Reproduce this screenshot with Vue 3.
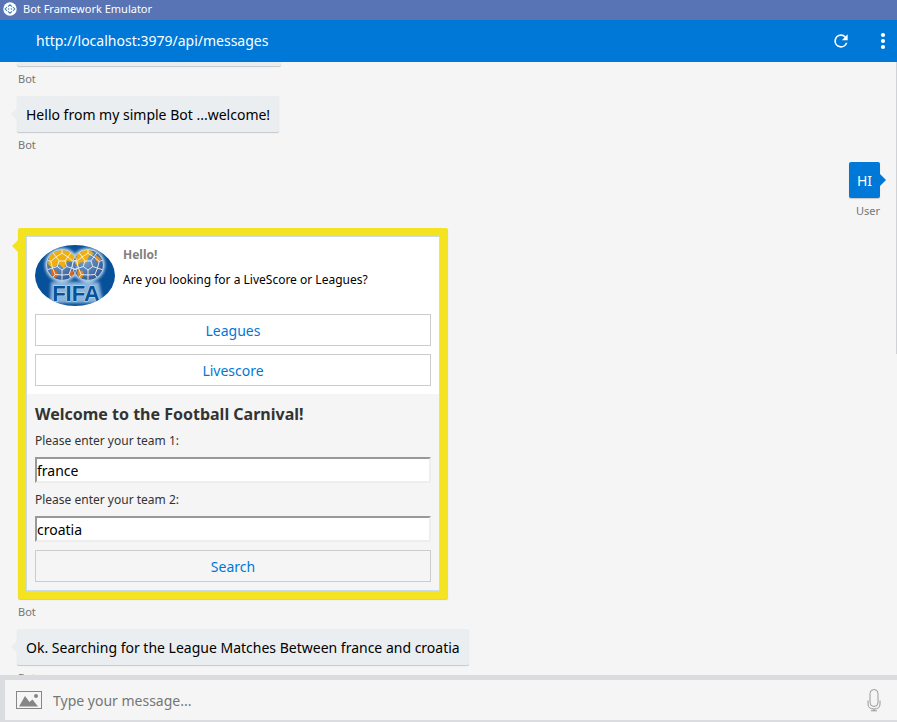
<script setup>
import { ref } from 'vue'

const team1 = ref('france')
const team2 = ref('croatia')
const draft = ref('')

const ringPoints = (cx, cy, r) =>
  Array.from({ length: 5 }, (_, i) => {
    const a = ((i * 72 + 90) * Math.PI) / 180
    return [cx + r * Math.cos(a), cy + r * Math.sin(a)]
  })

const makeBall = (cx, cy) => {
  const inner = ringPoints(cx, cy, 5)
  const mid = ringPoints(cx, cy, 10)
  const outer = ringPoints(cx, cy, 15)
  let d = 'M' + inner.map((p) => p.join(' ')).join('L') + 'Z'
  inner.forEach((p, i) => {
    const m = mid[i]
    const n = mid[(i + 1) % 5]
    const kx = cx + ((m[0] + n[0]) / 2 - cx) * 1.45
    const ky = cy + ((m[1] + n[1]) / 2 - cy) * 1.45
    d += `M${p.join(' ')}L${m.join(' ')}L${kx} ${ky}L${n.join(' ')}`
    d += `M${m.join(' ')}L${outer[i].join(' ')}M${kx} ${ky}L${cx + (kx - cx) * 1.28} ${cy + (ky - cy) * 1.28}`
  })
  return { cx, cy, d }
}
const balls = [makeBall(27, 20), makeBall(53, 20)]
</script>

<template>
  <div class="app">
    <div class="titlebar">
      <svg class="app-icon" viewBox="0 0 14 14" aria-hidden="true">
        <circle cx="7" cy="7" r="6.7" fill="#fff" />
        <path d="M5 4.6 7 2.8l2 1.8M5 9.4l2 1.8 2-1.8M4 5 2.2 7 4 9M10 5l1.8 2L10 9" fill="none" stroke="#3c86c4" stroke-width="1.1" />
        <circle cx="5.6" cy="7" r=".8" fill="#3c86c4" />
        <circle cx="8.4" cy="7" r=".8" fill="#3c86c4" />
      </svg>
      <span>Bot Framework Emulator</span>
    </div>

    <header class="header">
      <span class="url">http://localhost:3979/api/messages</span>
      <button class="icon-button" type="button" aria-label="Refresh">
        <svg width="20" height="20" viewBox="0 0 24 24"><path fill="#fff" d="M17.65 6.35A7.96 7.96 0 0 0 12 4a8 8 0 1 0 7.73 10h-2.08A6 6 0 1 1 12 6c1.66 0 3.14.69 4.22 1.78L13 11h7V4z" /></svg>
      </button>
      <button class="icon-button" type="button" aria-label="Menu">
        <svg width="20" height="20" viewBox="0 0 20 20" fill="#fff"><circle cx="10" cy="4" r="2.1" /><circle cx="10" cy="10" r="2.1" /><circle cx="10" cy="16" r="2.1" /></svg>
      </button>
    </header>

    <main class="chat">
      <div class="message">
        <div class="bubble bubble-cut"></div>
        <div class="from">Bot</div>
      </div>
      <div class="message">
        <div class="bubble tail">Hello from my simple Bot ...welcome!</div>
        <div class="from">Bot</div>
      </div>
      <div class="message mine">
        <div class="bubble tail">HI</div>
        <div class="from">User</div>
      </div>
      <div class="message">
        <div class="card tail">
          <div class="card-body">
            <section class="section">
              <div class="hero">
                <svg class="logo" viewBox="0 0 80 61" role="img" aria-label="FIFA">
                  <defs>
                    <clipPath id="oval"><ellipse cx="40" cy="30.5" rx="40" ry="30.5" /></clipPath>
                    <radialGradient id="ball" cx=".4" cy=".35" r=".7">
                      <stop offset="0" stop-color="#7da4d0" />
                      <stop offset="1" stop-color="#2c5794" />
                    </radialGradient>
                    <filter id="glow" x="-20%" y="-20%" width="140%" height="140%"><feGaussianBlur stdDeviation="1.4" /></filter>
                  </defs>
                  <g clip-path="url(#oval)">
                    <rect width="80" height="61" fill="#07509a" />
                    <g filter="url(#glow)" fill="#b9d7ef">
                      <circle cx="27" cy="20" r="17" />
                      <circle cx="53" cy="20" r="17" />
                      <path d="M16 37h48l4 21H15z" opacity=".75" />
                    </g>
                    <circle v-for="b in balls" :key="b.cx" :cx="b.cx" :cy="b.cy" r="15.5" fill="url(#ball)" />
                    <path d="M14 13q4-8 13-8 9 0 13 7l-3 5-5-1-3 8-5-5-7 4-4-4z" fill="#eeb010" />
                    <path d="M16 24l5 1 3 5-4 3-4-4zM34 27l5-2-1 6-4 2z" fill="#d9691b" />
                    <path d="M42 10q5-6 13-5l4 4-5 2-3 7-5-1-4 4-2-3z" fill="#eeb010" />
                    <path d="M43 25l5 1 1 4-3 4-4-5zM61 10l5 4-3 4-3-4z" fill="#e58a14" />
                    <path v-for="b in balls" :key="'seam' + b.cx" :d="b.d" fill="none" stroke="#eef4f8" stroke-width=".9" />
                    <circle v-for="b in balls" :key="'rim' + b.cx" :cx="b.cx" :cy="b.cy" r="15.5" fill="none" stroke="#dfeaf2" stroke-width=".7" />
                    <text x="41" y="56" text-anchor="middle" class="logo-text">FIFA</text>
                  </g>
                </svg>
                <div class="hero-text">
                  <div class="hero-title">Hello!</div>
                  <div class="hero-copy">Are you looking for a LiveScore or Leagues?</div>
                </div>
              </div>
              <button class="action" type="button">Leagues</button>
              <button class="action" type="button">Livescore</button>
            </section>
            <form class="section form" @submit.prevent>
              <h2 class="form-title">Welcome to the Football Carnival!</h2>
              <label class="field-label" for="team1">Please enter your team 1:</label>
              <input id="team1" v-model="team1" class="field" type="text" />
              <label class="field-label" for="team2">Please enter your team 2:</label>
              <input id="team2" v-model="team2" class="field" type="text" />
              <button class="action" type="submit">Search</button>
            </form>
          </div>
        </div>
        <div class="from">Bot</div>
      </div>
      <div class="message">
        <div class="bubble tail">Ok. Searching for the League Matches Between france and croatia</div>
        <div class="from">Bot</div>
      </div>
      <div class="scroll-thumb"></div>
    </main>

    <form class="composer" @submit.prevent>
      <button class="composer-button" type="button" aria-label="Upload image">
        <svg width="26" height="18" viewBox="0 0 26 18">
          <rect x=".5" y=".5" width="25" height="17" fill="none" stroke="#858585" />
          <path d="M3 15.5 9 5l4.500 6 3-2.500 5.500 7z" fill="#858585" />
          <circle cx="20" cy="5" r="2" fill="#858585" />
        </svg>
      </button>
      <input v-model="draft" class="composer-input" type="text" placeholder="Type your message..." aria-label="Type your message" />
      <button class="composer-button" type="button" aria-label="Speak">
        <svg width="14" height="24" viewBox="0 0 14 24" fill="none" stroke="#999">
          <rect x="3" y="1.500" width="8" height="17" rx="4" />
          <path d="M1 12.500v3.500q0 5 6 5t6-5v-3.500M7 21v2M4 22.800h6" />
        </svg>
      </button>
    </form>
  </div>
</template>

<style>
body {
  margin: 0;
}
</style>

<style scoped>
.app {
  display: flex;
  flex-direction: column;
  height: 100vh;
  background: #f5f5f5;
  font-family: "Noto Sans", "Open Sans", sans-serif;
  font-size: 14px;
  line-height: 20px;
  color: #000;
}
.app *,
.app {
  box-sizing: border-box;
}
button,
input {
  font: inherit;
  margin: 0;
}
.titlebar {
  display: flex;
  flex: none;
  align-items: center;
  gap: 6px;
  height: 20px;
  padding: 0 3px 2px;
  background: #5874b4;
  color: #fff;
  font-size: 11px;
  line-height: 18px;
}
.app-icon {
  width: 14px;
  height: 14px;
}
.header {
  display: flex;
  flex: none;
  align-items: center;
  height: 42px;
  padding: 0 4px 0 36px;
  background: #0078d7;
  color: #fff;
}
.url {
  flex: 1;
  line-height: 22px;
}
.icon-button,
.composer-button {
  display: flex;
  align-items: center;
  justify-content: center;
  padding: 0;
  border: 0;
  background: none;
}
.icon-button {
  width: 20px;
  height: 42px;
  margin-left: 22px;
}
.chat {
  position: relative;
  flex: 1;
  min-height: 0;
  overflow: hidden;
  padding: 0 17px;
}
.message {
  display: flex;
  flex-direction: column;
  align-items: flex-start;
}
.bubble {
  position: relative;
  padding: 9px 9px 7px;
  border-radius: 2px;
  background: #eaeef0;
  box-shadow: 0 1px 1px #c4c8ca;
}
.bubble-cut {
  width: 264px;
  height: 4px;
  padding: 0;
}
.from {
  margin: 5px 1px 9px;
  font-size: 11px;
  line-height: 16px;
  color: #767676;
}
.tail::before {
  content: "";
  position: absolute;
  top: 12px;
  left: -6px;
  border: solid transparent;
  border-width: 6px 6px 6px 0;
  border-right-color: #eaeef0;
}
.mine {
  align-items: flex-end;
}
.mine .bubble {
  padding-right: 8px;
  padding-left: 8px;
  background: #0078d7;
  color: #fff;
}
.mine .tail::before {
  right: -6px;
  left: auto;
  border-width: 6px 0 6px 6px;
  border-left-color: #0078d7;
}
.mine .from {
  margin-right: 0;
}
.card {
  position: relative;
  width: 430px;
  max-width: 100%;
  margin-left: 1px;
  padding: 8px;
  border-radius: 2px;
  background: #f3e321;
  box-shadow: 0 1px 1px #c4c8ca;
}
.card.tail::before {
  border-right-color: #f3e321;
}
.card-body {
  border: 1px solid #cbdce8;
  background: #fff;
}
.section {
  display: flex;
  flex-direction: column;
  gap: 8px;
  padding: 8px;
}
.hero {
  display: flex;
  gap: 8px;
}
.logo {
  flex: none;
  width: 80px;
  height: 61px;
}
.logo-text {
  font: bold 22px "Liberation Sans", sans-serif;
  fill: #07509a;
  stroke: #c4ddf0;
  stroke-width: 1px;
  paint-order: stroke;
}
.hero-title {
  margin-bottom: 5px;
  font-size: 12px;
  font-weight: 700;
  color: #808080;
}
.hero-copy {
  font-size: 12px;
}
.action {
  height: 32px;
  padding: 2px 0 0;
  border: 1px solid #ccc;
  background: transparent;
  color: #0078d7;
}
.form {
  background: #f5f5f5;
}
.form-title {
  margin: 0 0 -2px;
  font-size: 16px;
  line-height: 24px;
  color: #333;
}
.field-label {
  font-size: 12px;
  line-height: 17px;
  color: #333;
}
.field {
  width: 100%;
  height: 26px;
  padding: 0;
  border: 2px solid;
  border-color: #999 #eee #eee #999;
  background: #fff;
  color: #000;
}
.scroll-thumb {
  position: absolute;
  top: 0;
  right: 0;
  width: 1px;
  height: 292px;
  background: #d0d2d5;
}
.composer {
  display: flex;
  flex: none;
  align-items: center;
  gap: 11px;
  height: 47px;
  padding: 0 16px 0 11px;
  border: solid #dadce0;
  border-width: 5px 0 2px 5px;
}
.composer-input {
  flex: 1;
  min-width: 0;
  padding: 2px 0 0;
  border: 0;
  outline: 0;
  background: transparent;
}
.composer-input::placeholder {
  color: #767676;
  opacity: 1;
}
</style>
